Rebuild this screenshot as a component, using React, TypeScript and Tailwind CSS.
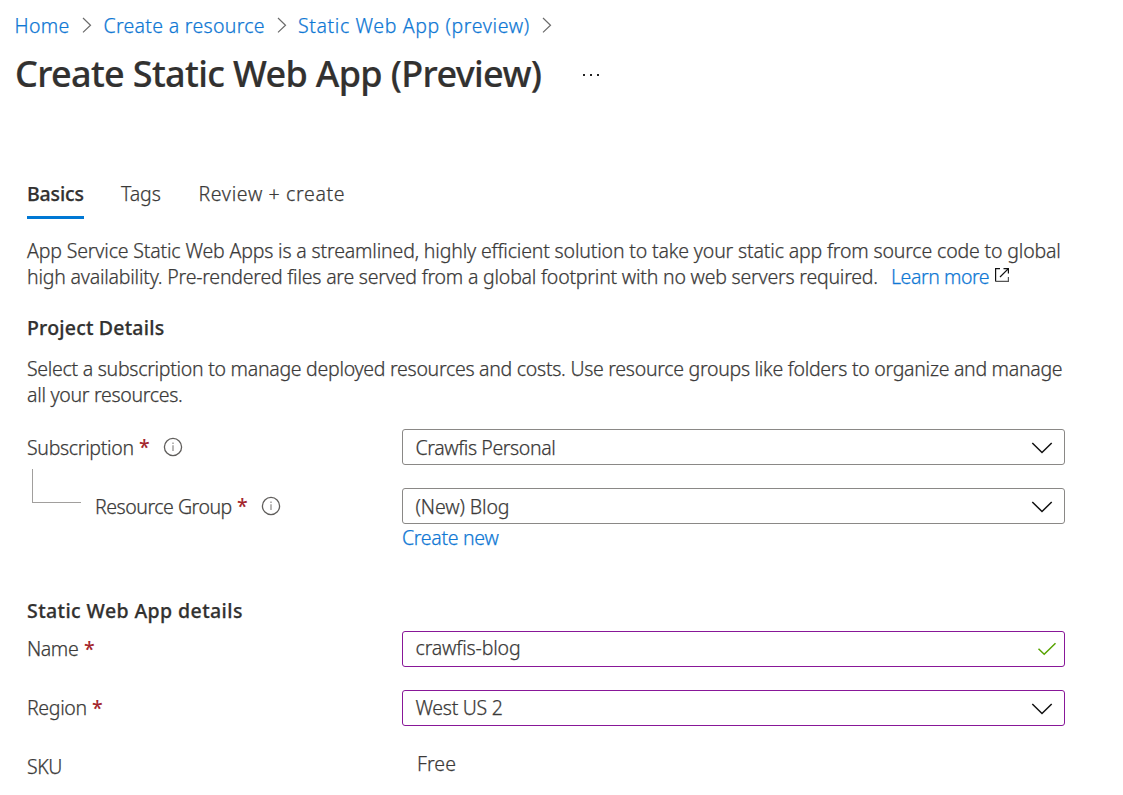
import type { ReactNode } from "react";

function CrumbChevron() {
  return (
    <svg width="10" height="18" viewBox="0 0 10 18" fill="none" stroke="#6b6b6b" strokeWidth="1.2" className="shrink-0">
      <path d="M1 1 8.5 8.2 1 15.4" />
    </svg>
  );
}

function DownChevron() {
  return (
    <svg width="22" height="14" viewBox="0 0 22 14" fill="none" stroke="#111111" strokeWidth="1.5" className="mr-[11px] mt-0.5 shrink-0">
      <path d="M1.3 2 11 11.5 20.7 2" />
    </svg>
  );
}

function Check() {
  return (
    <svg width="20" height="14" viewBox="0 0 20 14" fill="none" stroke="#57a300" strokeWidth="1.5" className="mr-[7px] shrink-0">
      <path d="M1.5 6.8 7.2 12.2 18.5 1.2" />
    </svg>
  );
}

function Info() {
  return (
    <svg width="20" height="20" viewBox="0 0 20 20" fill="none" stroke="#605e5c" className="ml-[13px] shrink-0">
      <circle cx="10" cy="10" r="8.6" strokeWidth="1.3" />
      <path d="M10 8.3V14M10 5.6V7" strokeWidth="1.2" stroke="#8a8886" />
    </svg>
  );
}

function External() {
  return (
    <svg width="16" height="16" viewBox="0 0 16 16" fill="none" stroke="#111111" strokeWidth="1.2" className="mt-[-4px] ml-[5px] shrink-0">
      <path d="M6 1.6H1.6V14.4" />
      <path d="M1.6 14.4H14.4V10" stroke="#555555" />
      <path d="M9.5 1.6H14.4V6.5M14.4 1.6 6 10" />
    </svg>
  );
}

function Star() {
  return <span className="ml-1.5 font-medium text-[#a4262c] [-webkit-text-stroke:0px]">*</span>;
}

function Field({ className, children }: { className: string; children: ReactNode }) {
  return (
    <div className={`flex h-9 w-[663px] shrink-0 items-center justify-between rounded-[3px] border pl-[12.5px] ${className}`}>
      {children}
    </div>
  );
}

export default function App() {
  return (
    <main className="h-[795px] w-[1123px] overflow-hidden bg-white font-['Noto_Sans',sans-serif] text-[19.5px] leading-[26px] font-light whitespace-nowrap text-[#3b3a39] [-webkit-text-stroke:0.25px]">
      <nav className="flex h-[52px] items-center pl-[14.5px] text-[#0f78d4]">
        <a className="w-[67.5px] tracking-[0.35px]">Home</a>
        <CrumbChevron />
        <a className="ml-[11.5px] w-[173.5px] tracking-[0.3px]">Create a resource</a>
        <CrumbChevron />
        <a className="ml-[11px] w-[244px] tracking-[0.62px]">Static Web App (preview)</a>
        <CrumbChevron />
      </nav>
      <header className="mt-[-2px] flex h-[50px] items-center pl-[15px]">
        <h1 className="-mt-0.5 w-[567px] text-[36px] leading-[50px] font-medium tracking-[-0.66px] text-[#323130] [-webkit-text-stroke:0.2px]">Create Static Web App (Preview)</h1>
        <svg width="20" height="4" viewBox="0 0 20 4" fill="#222222">
          <path d="M1 1h2v2H1zM8 1h2v2H8zM15 1h2v2h-2z" />
        </svg>
      </header>
      <section className="pl-[27px]">
        <div className="mt-[81px] flex h-[38px]">
          <div className="mr-[37px] w-[57px] border-b-[3px] border-[#0078d4] font-medium tracking-[-0.15px] text-[#323130]">Basics</div>
          <div className="w-[77.5px] tracking-[-0.1px]">Tags</div>
          <div className="tracking-[0.65px]">Review + create</div>
        </div>
        <div className="mt-[19px] tracking-[-0.16px]">App Service Static Web Apps is a streamlined, highly efficient solution to take your static app from source code to global</div>
        <div className="flex items-center">
          <span className="w-[864px] tracking-[-0.21px]">high availability. Pre-rendered files are served from a global footprint with no web servers required.</span>
          <a className="w-[98px] tracking-[-0.45px] text-[#0f78d4]">Learn more</a>
          <External />
        </div>
        <h2 className="mt-[25px] font-medium tracking-[0.2px] text-[#323130]">Project Details</h2>
        <div className="mt-[15px] tracking-[-0.28px]">Select a subscription to manage deployed resources and costs. Use resource groups like folders to organize and manage</div>
        <div className="tracking-[-0.3px]">all your resources.</div>
        <div className="mt-[21px] flex h-[36px] items-center">
          <div className="flex w-[375px] items-center">
            <span className="w-[106px] pt-0.5 tracking-[-0.32px]">Subscription</span>
            <Star />
            <Info />
          </div>
          <Field className="border-[#8a8886]">
            <span className="pt-0.5 tracking-[-0.4px]">Crawfis Personal</span>
            <DownChevron />
          </Field>
        </div>
        <div className="flex h-[59px] items-end">
          <div className="flex h-[55px] w-[375px] pl-[5px]">
            <div className="mr-[14px] h-[34px] w-[49px] border-b border-l border-[#a19f9d]" />
            <div className="flex h-9 items-center self-end">
              <span className="w-[136px] pt-0.5 tracking-[-0.47px]">Resource Group</span>
              <Star />
              <Info />
            </div>
          </div>
          <Field className="border-[#8a8886]">
            <span className="pt-0.5 tracking-[-0.1px]">(New) Blog</span>
            <DownChevron />
          </Field>
        </div>
        <a className="mt-px block pl-[375px] tracking-[-0.3px] text-[#0f78d4]">Create new</a>
        <h2 className="mt-[47px] font-medium tracking-[0.4px] text-[#323130]">Static Web App details</h2>
        <div className="mt-[7px] flex h-9 items-center">
          <div className="flex w-[375px]">
            <span className="w-[51px] tracking-[-0.4px]">Name</span>
            <Star />
          </div>
          <Field className="border-[#881798]">
            <span className="pb-0.5 tracking-[-0.15px]">crawfis-blog</span>
            <Check />
          </Field>
        </div>
        <div className="mt-[23px] flex h-9 items-center">
          <div className="flex w-[375px]">
            <span className="w-[59px] tracking-[-0.33px]">Region</span>
            <Star />
          </div>
          <Field className="border-[#881798]">
            <span className="tracking-[-0.3px]">West US 2</span>
            <DownChevron />
          </Field>
        </div>
        <div className="mt-[25px] flex h-[30px]">
          <span className="w-[390px] pt-[3px] tracking-[-0.4px]">SKU</span>
          <span className="tracking-[0.1px]">Free</span>
        </div>
      </section>
    </main>
  );
}
